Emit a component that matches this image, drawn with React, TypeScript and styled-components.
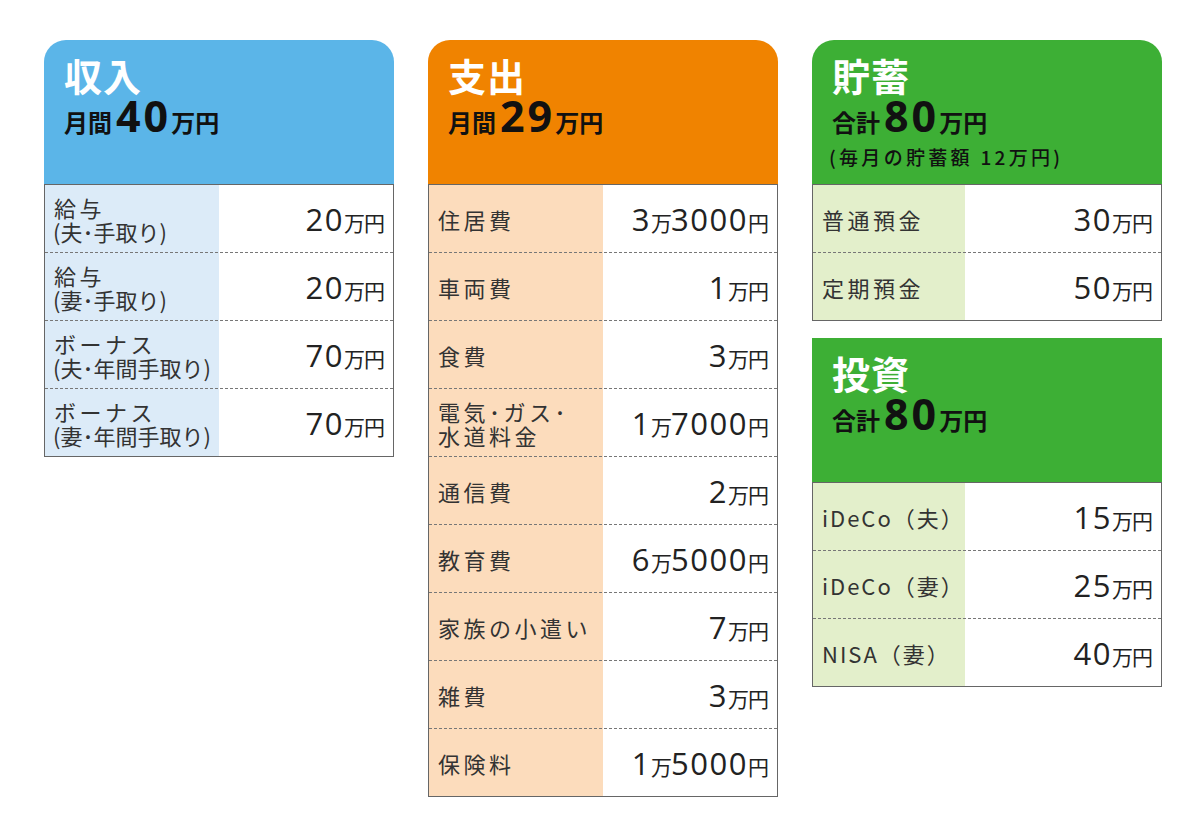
import React from "react";
import styled, { createGlobalStyle } from "styled-components";

const GlobalStyle = createGlobalStyle`
  html, body { margin: 0; padding: 0; background: #ffffff; }
  body { font-family: "Noto Sans CJK JP", "Noto Sans", sans-serif; color: #222; }
`;

type Theme = { main: string; light: string };

const BLUE: Theme = { main: "#5bb5e8", light: "#dcebf8" };
const ORANGE: Theme = { main: "#f08300", light: "#fcdcbc" };
const GREEN: Theme = { main: "#3daf35", light: "#e3efcb" };

const NUM_FONT = `"Open Sans", "Noto Sans", "Noto Sans CJK JP", sans-serif`;

type Spacing = "tight" | "latin" | "wide";
const SPACING: Record<Spacing, string> = { tight: "0px", latin: "2px", wide: "3.5px" };

const Page = styled.div`
  display: flex;
  align-items: flex-start;
  gap: 34px;
  padding: 40px 0 0 44px;
  width: 1200px;
  height: 840px;
  box-sizing: border-box;
`;

const Column = styled.div`
  display: flex;
  flex-direction: column;
  gap: 17px;
  width: 350px;
`;

const Panel = styled.section`
  display: flex;
  flex-direction: column;
  width: 350px;
`;

const Header = styled.div<{ $bg: string; $round: boolean }>`
  background: ${(p) => p.$bg};
  height: 144px;
  box-sizing: border-box;
  padding: 12px 20px 0 20px;
  border-radius: ${(p) => (p.$round ? "22px 22px 0 0" : "0")};
  display: flex;
  flex-direction: column;
`;

const Title = styled.div`
  color: #ffffff;
  font-size: 38px;
  font-weight: 700;
  line-height: 46px;
  letter-spacing: 1px;
`;

const Total = styled.div`
  color: #111;
  font-weight: 700;
  font-size: 24px;
  line-height: 40px;
  display: flex;
  align-items: baseline;
  margin-top: -2px;
`;

const TotalNum = styled.span`
  font-family: ${NUM_FONT};
  font-size: 43px;
  font-weight: 700;
  letter-spacing: 3px;
  margin: 0 0 0 4px;
`;

const Note = styled.div`
  color: #111;
  font-size: 19px;
  font-weight: 500;
  line-height: 24px;
  margin-top: 3px;
  margin-left: -3px;
  letter-spacing: 3.3px;
  white-space: nowrap;
`;

const Table = styled.div`
  border: 1.5px solid #666;
  display: flex;
  flex-direction: column;
`;

const Row = styled.div<{ $light: string; $first: boolean; $labelW: number }>`
  display: grid;
  grid-template-columns: ${(p) => p.$labelW}px 1fr;
  height: ${(p) => (p.$first ? "67px" : "68px")};
  box-sizing: border-box;
  border-top: ${(p) => (p.$first ? "none" : "1px dashed #777")};
  background: linear-gradient(
    to right,
    ${(p) => p.$light} 0,
    ${(p) => p.$light} ${(p) => p.$labelW}px,
    #ffffff ${(p) => p.$labelW}px
  );
`;

const Label = styled.div`
  display: flex;
  flex-direction: column;
  justify-content: center;
  padding-left: 9px;
  font-size: 22px;
  line-height: 24px;
  color: #333;
  white-space: nowrap;
`;

const LabelLine = styled.span<{ $spacing: Spacing }>`
  letter-spacing: ${(p) => SPACING[p.$spacing]};
  margin-left: ${(p) => (p.$spacing === "tight" ? "-1px" : "0")};
`;

const Value = styled.div`
  display: flex;
  align-items: baseline;
  justify-content: flex-end;
  align-self: center;
  padding-right: 9px;
  color: #222;
  white-space: nowrap;
`;

const Num = styled.span`
  font-family: ${NUM_FONT};
  font-size: 31px;
  font-weight: 400;
  letter-spacing: 1.5px;
`;

const Unit = styled.span`
  font-size: 21px;
  font-weight: 400;
  letter-spacing: -1px;
`;

type Item = { label: string[]; value: string };

function spacingOf(line: string): Spacing {
  if (line.startsWith("(")) return "tight";
  if (/^[A-Za-z]/.test(line)) return "latin";
  return "wide";
}

function ValueText({ v }: { v: string }) {
  const parts = v.split(/(\d+)/).filter((s) => s.length > 0);
  return (
    <Value>
      {parts.map((p, i) =>
        /^\d+$/.test(p) ? <Num key={i}>{p}</Num> : <Unit key={i}>{p}</Unit>
      )}
    </Value>
  );
}

function Card({
  theme,
  title,
  prefix,
  amount,
  note,
  round = true,
  labelW,
  items,
}: {
  theme: Theme;
  title: string;
  prefix: string;
  amount: string;
  note?: string;
  round?: boolean;
  labelW: number;
  items: Item[];
}) {
  return (
    <Panel>
      <Header $bg={theme.main} $round={round}>
        <Title>{title}</Title>
        <Total>
          {prefix}
          <TotalNum>{amount}</TotalNum>万円
        </Total>
        {note && <Note>{note}</Note>}
      </Header>
      <Table>
        {items.map((it, i) => (
          <Row key={i} $light={theme.light} $first={i === 0} $labelW={labelW}>
            <Label>
              {it.label.map((l, j) => (
                <LabelLine key={j} $spacing={spacingOf(l)}>
                  {l}
                </LabelLine>
              ))}
            </Label>
            <ValueText v={it.value} />
          </Row>
        ))}
      </Table>
    </Panel>
  );
}

const income: Item[] = [
  { label: ["給与", "(夫･手取り)"], value: "20万円" },
  { label: ["給与", "(妻･手取り)"], value: "20万円" },
  { label: ["ボーナス", "(夫･年間手取り)"], value: "70万円" },
  { label: ["ボーナス", "(妻･年間手取り)"], value: "70万円" },
];

const expense: Item[] = [
  { label: ["住居費"], value: "3万3000円" },
  { label: ["車両費"], value: "1万円" },
  { label: ["食費"], value: "3万円" },
  { label: ["電気･ガス･", "水道料金"], value: "1万7000円" },
  { label: ["通信費"], value: "2万円" },
  { label: ["教育費"], value: "6万5000円" },
  { label: ["家族の小遣い"], value: "7万円" },
  { label: ["雑費"], value: "3万円" },
  { label: ["保険料"], value: "1万5000円" },
];

const savings: Item[] = [
  { label: ["普通預金"], value: "30万円" },
  { label: ["定期預金"], value: "50万円" },
];

const invest: Item[] = [
  { label: ["iDeCo（夫）"], value: "15万円" },
  { label: ["iDeCo（妻）"], value: "25万円" },
  { label: ["NISA（妻）"], value: "40万円" },
];

export default function App() {
  return (
    <>
      <GlobalStyle />
      <Page>
        <Column>
          <Card theme={BLUE} title="収入" prefix="月間" amount="40" labelW={174} items={income} />
        </Column>
        <Column>
          <Card theme={ORANGE} title="支出" prefix="月間" amount="29" labelW={174} items={expense} />
        </Column>
        <Column>
          <Card
            theme={GREEN}
            title="貯蓄"
            prefix="合計"
            amount="80"
            note="(毎月の貯蓄額 12万円)"
            labelW={152}
            items={savings}
          />
          <Card
            theme={GREEN}
            title="投資"
            prefix="合計"
            amount="80"
            round={false}
            labelW={152}
            items={invest}
          />
        </Column>
      </Page>
    </>
  );
}
